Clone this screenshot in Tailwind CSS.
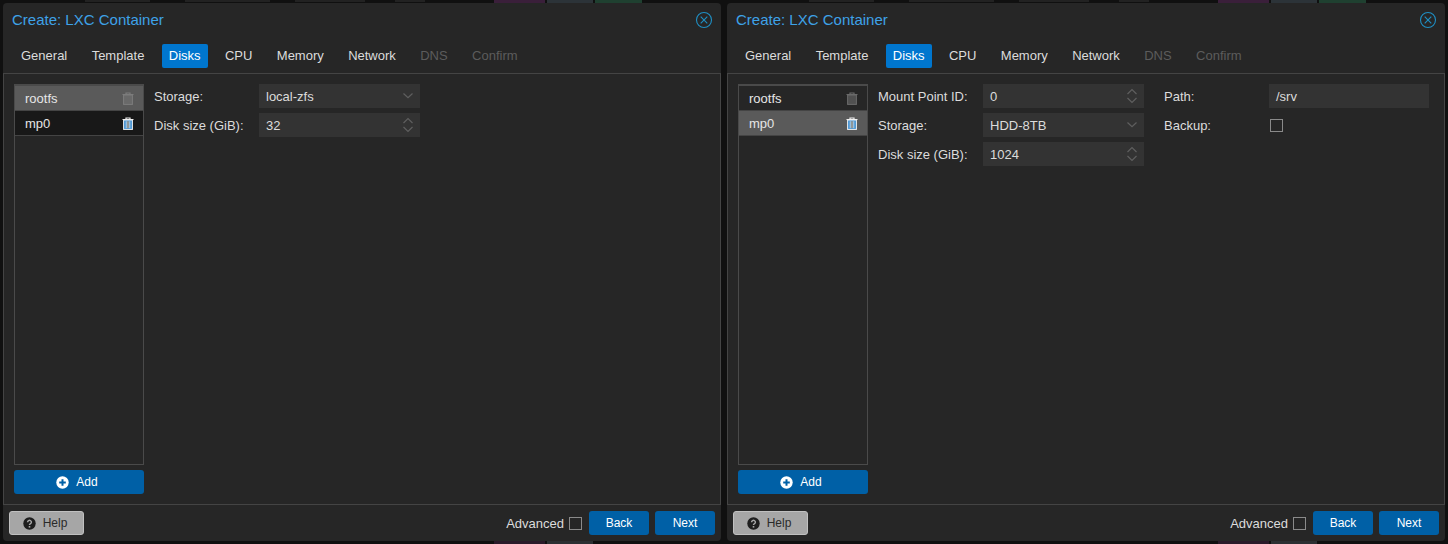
<!DOCTYPE html>
<html><head><meta charset="utf-8"><script src="https://cdn.jsdelivr.net/npm/@tailwindcss/browser@4"></script></head>
<body class="relative m-0 bg-[#101010] overflow-hidden w-[1448px] h-[544px] font-['Liberation_Sans',Arial,sans-serif]">
<!-- dimmed page behind the modal windows -->
<div class="absolute left-0 top-0 w-[1448px] h-[544px]">
  <div class="absolute left-[85px] top-0 w-[65px] h-[2px] bg-[#222]"></div>
  <div class="absolute left-[185px] top-0 w-[85px] h-[2px] bg-[#222]"></div>
  <div class="absolute left-[295px] top-0 w-[70px] h-[2px] bg-[#222]"></div>
  <div class="absolute left-[395px] top-0 w-[30px] h-[2px] bg-[#222]"></div>
  <div class="absolute left-[494px] top-0 w-[51px] h-[3px] bg-[#3a1f3a]"></div>
  <div class="absolute left-[547px] top-0 w-[46px] h-[3px] bg-[#2c3338]"></div>
  <div class="absolute left-[595px] top-0 w-[47px] h-[3px] bg-[#1f4030]"></div>
  <div class="absolute left-[809px] top-0 w-[65px] h-[2px] bg-[#222]"></div>
  <div class="absolute left-[909px] top-0 w-[85px] h-[2px] bg-[#222]"></div>
  <div class="absolute left-[1019px] top-0 w-[70px] h-[2px] bg-[#222]"></div>
  <div class="absolute left-[1119px] top-0 w-[30px] h-[2px] bg-[#222]"></div>
  <div class="absolute left-[1218px] top-0 w-[51px] h-[3px] bg-[#3a1f3a]"></div>
  <div class="absolute left-[1271px] top-0 w-[46px] h-[3px] bg-[#2c3338]"></div>
  <div class="absolute left-[1319px] top-0 w-[47px] h-[3px] bg-[#1f4030]"></div>
  <div class="absolute left-[494px] bottom-0 w-[51px] h-[3px] bg-[#2a1a2a]"></div>
  <div class="absolute left-[547px] bottom-0 w-[46px] h-[3px] bg-[#2c3033]"></div>
  <div class="absolute left-[1218px] bottom-0 w-[51px] h-[3px] bg-[#2a1a2a]"></div>
  <div class="absolute left-[1271px] bottom-0 w-[46px] h-[3px] bg-[#2c3033]"></div>
</div>
<div class="relative flex gap-[6px] pl-[3px] pt-[3px]">
<!-- LEFT -->
<section class="w-[718px] h-[538px] bg-[#262626] rounded-[4px] flex flex-col shrink-0">
  <header class="h-[35px] flex items-center justify-between pl-[9px] pr-[8px] pb-[2px]">
    <span class="text-[15px] text-[#3ea2e8] leading-[18px]">Create: LXC Container</span>
    <svg class="mt-[1px]" width="18" height="18" viewBox="0 0 18 18" fill="none" stroke="#1f8fc4" stroke-width="1.1"><circle cx="9" cy="9" r="7.5"/><path d="M5.7 5.7l6.6 6.6M12.3 5.7l-6.6 6.6"/></svg>
  </header>
  <nav class="h-[36px] flex items-center pl-[11px] text-[13px] text-[#dcdcdc] border-b border-[#444]">
    <span class="px-[7px] h-[24px] leading-[24px] mr-[10.4px]">General</span>
    <span class="px-[7px] h-[24px] leading-[24px] mr-[10.4px]">Template</span>
    <span class="px-[7px] h-[24px] leading-[24px] mr-[10.4px] bg-[#0076ce] text-white rounded-[2px]">Disks</span>
    <span class="px-[7px] h-[24px] leading-[24px] mr-[10.4px]">CPU</span>
    <span class="px-[7px] h-[24px] leading-[24px] mr-[10.4px]">Memory</span>
    <span class="px-[7px] h-[24px] leading-[24px] mr-[10.4px]">Network</span>
    <span class="px-[7px] h-[24px] leading-[24px] mr-[10.4px] text-[#5c5c5c]">DNS</span>
    <span class="px-[7px] h-[24px] leading-[24px] text-[#5c5c5c]">Confirm</span>
  </nav>
  <main class="flex-1 border-x border-[#444] flex pl-[10px] pt-[10px] pb-[10px] min-h-0">
    <div class="w-[130px] flex flex-col">
      <div class="h-[381px] border border-t-2 border-[#4a4a4a] text-[13px] text-[#e6e6e6]">
        <div class="h-[25px] bg-[#5a5a5a] flex items-center justify-between pl-[10px] pr-[9px] border-b border-[#444]"><span class="pt-[2px]">rootfs</span>
          <svg width="12" height="13" viewBox="0 0 12 13" fill="none"><path d="M.5 2.5h11M4 2.3V1h4v1.3" stroke="#7d7d7d" stroke-width="1.2"/><rect x="1.6" y="3" width="8.8" height="9.4" fill="#696969" stroke="#7d7d7d"/></svg></div>
        <div class="h-[25px] bg-[#181818] flex items-center justify-between pl-[10px] pr-[9px] border-b border-[#444]"><span class="pt-[2px]">mp0</span>
          <svg width="12" height="13" viewBox="0 0 12 13" fill="none"><path d="M.5 2.5h11M4 2.3V1h4v1.3" stroke="#f0f0f0" stroke-width="1.2"/><rect x="1.6" y="3" width="8.8" height="9.4" fill="#3f8fd2" stroke="#f0f0f0"/><path d="M4.2 4.2v7M7.8 4.2v7" stroke="#dde6ee" stroke-width=".8"/><path d="M6 4.2v7" stroke="#e2a060" stroke-width="1"/></svg></div>
      </div>
      <button class="mt-[5px] h-[24px] w-[130px] bg-[#0060a6] rounded-[3px] text-white text-[12px] flex items-center justify-center gap-[7px] pr-[4px]">
        <svg width="13" height="13" viewBox="0 0 13 13"><circle cx="6.5" cy="6.5" r="6.2" fill="#fff"/><path d="M6.5 3.2v6.6M3.2 6.5h6.6" stroke="#0060a6" stroke-width="2"/></svg>Add</button>
    </div>
    <div class="ml-[10px] text-[13px] text-[#dcdcdc] flex flex-col gap-[5px]">
      <div class="flex items-center h-[24px]"><label class="w-[105px] pt-[2px]">Storage:</label>
        <div class="w-[161px] h-[24px] bg-[#333] flex items-center justify-between pl-[7px] pr-[6px]"><span class="pt-[2px]">local-zfs</span><svg width="12" height="8" viewBox="0 0 12 8" fill="none" stroke="#5f5f5f" stroke-width="1.2"><path d="M1.5 1.5L6 5.7l4.5-4.2"/></svg></div></div>
      <div class="flex items-center h-[24px]"><label class="w-[105px] pt-[2px]">Disk size (GiB):</label>
        <div class="w-[161px] h-[24px] bg-[#333] flex items-center justify-between pl-[7px] pr-[6px]"><span class="pt-[2px]">32</span><svg width="12" height="16" viewBox="0 0 12 16" fill="none" stroke="#5f5f5f" stroke-width="1.2"><path d="M1.5 6L6 1.6 10.5 6M1.5 10L6 14.4 10.5 10"/></svg></div></div>
    </div>
  </main>
  <footer class="h-[37px] border-t border-[#444] flex items-center justify-between pl-[6px] pr-[6px]">
    <button class="w-[75px] h-[24px] bg-[#a6a6a6] border border-[#c0c0c0] rounded-[3px] text-[#2a2a2a] text-[12px] flex items-center justify-center gap-[7px] pr-[3px]">
      <svg width="13" height="13" viewBox="0 0 13 13"><circle cx="6.5" cy="6.5" r="6.2" fill="#1e1e1e"/><path d="M4.6 5.2a1.9 1.8 0 1 1 2.9 1.5c-.7.4-1 .7-1 1.4" fill="none" stroke="#a6a6a6" stroke-width="1.5"/><rect x="5.7" y="9" width="1.6" height="1.6" fill="#a6a6a6"/></svg>Help</button>
    <div class="flex items-center">
      <span class="text-[13px] text-[#dcdcdc] mr-[5px] pt-[2px]">Advanced</span>
      <span class="w-[13px] h-[13px] border border-[#8a8a8a] mr-[7px]"></span>
      <button class="w-[60px] h-[24px] bg-[#0060a6] rounded-[3px] text-white text-[12px]">Back</button>
      <button class="w-[60px] h-[24px] ml-[6px] bg-[#0060a6] rounded-[3px] text-white text-[12px]">Next</button>
    </div>
  </footer>
</section>
<!-- RIGHT -->
<section class="w-[718px] h-[538px] bg-[#262626] rounded-[4px] flex flex-col shrink-0">
  <header class="h-[35px] flex items-center justify-between pl-[9px] pr-[8px] pb-[2px]">
    <span class="text-[15px] text-[#3ea2e8] leading-[18px]">Create: LXC Container</span>
    <svg class="mt-[1px]" width="18" height="18" viewBox="0 0 18 18" fill="none" stroke="#1f8fc4" stroke-width="1.1"><circle cx="9" cy="9" r="7.5"/><path d="M5.7 5.7l6.6 6.6M12.3 5.7l-6.6 6.6"/></svg>
  </header>
  <nav class="h-[36px] flex items-center pl-[11px] text-[13px] text-[#dcdcdc] border-b border-[#444]">
    <span class="px-[7px] h-[24px] leading-[24px] mr-[10.4px]">General</span>
    <span class="px-[7px] h-[24px] leading-[24px] mr-[10.4px]">Template</span>
    <span class="px-[7px] h-[24px] leading-[24px] mr-[10.4px] bg-[#0076ce] text-white rounded-[2px]">Disks</span>
    <span class="px-[7px] h-[24px] leading-[24px] mr-[10.4px]">CPU</span>
    <span class="px-[7px] h-[24px] leading-[24px] mr-[10.4px]">Memory</span>
    <span class="px-[7px] h-[24px] leading-[24px] mr-[10.4px]">Network</span>
    <span class="px-[7px] h-[24px] leading-[24px] mr-[10.4px] text-[#5c5c5c]">DNS</span>
    <span class="px-[7px] h-[24px] leading-[24px] text-[#5c5c5c]">Confirm</span>
  </nav>
  <main class="flex-1 border-x border-[#444] flex pl-[10px] pt-[10px] pb-[10px] min-h-0">
    <div class="w-[130px] flex flex-col">
      <div class="h-[381px] border border-t-2 border-[#4a4a4a] text-[13px] text-[#e6e6e6]">
        <div class="h-[25px] bg-[#262626] flex items-center justify-between pl-[10px] pr-[9px] border-b border-[#444]"><span class="pt-[2px]">rootfs</span>
          <svg width="12" height="13" viewBox="0 0 12 13" fill="none"><path d="M.5 2.5h11M4 2.3V1h4v1.3" stroke="#6a6a6a" stroke-width="1.2"/><rect x="1.6" y="3" width="8.8" height="9.4" fill="#505050" stroke="#6a6a6a"/></svg></div>
        <div class="h-[25px] bg-[#5a5a5a] flex items-center justify-between pl-[10px] pr-[9px] border-b border-[#444]"><span class="pt-[2px]">mp0</span>
          <svg width="12" height="13" viewBox="0 0 12 13" fill="none"><path d="M.5 2.5h11M4 2.3V1h4v1.3" stroke="#f0f0f0" stroke-width="1.2"/><rect x="1.6" y="3" width="8.8" height="9.4" fill="#3f8fd2" stroke="#f0f0f0"/><path d="M4.2 4.2v7M7.8 4.2v7" stroke="#dde6ee" stroke-width=".8"/><path d="M6 4.2v7" stroke="#e2a060" stroke-width="1"/></svg></div>
      </div>
      <button class="mt-[5px] h-[24px] w-[130px] bg-[#0060a6] rounded-[3px] text-white text-[12px] flex items-center justify-center gap-[7px] pr-[4px]">
        <svg width="13" height="13" viewBox="0 0 13 13"><circle cx="6.5" cy="6.5" r="6.2" fill="#fff"/><path d="M6.5 3.2v6.6M3.2 6.5h6.6" stroke="#0060a6" stroke-width="2"/></svg>Add</button>
    </div>
    <div class="ml-[10px] text-[13px] text-[#dcdcdc] flex flex-col gap-[5px]">
      <div class="flex items-center h-[24px]"><label class="w-[105px] pt-[2px]">Mount Point ID:</label>
        <div class="w-[161px] h-[24px] bg-[#333] flex items-center justify-between pl-[7px] pr-[6px]"><span class="pt-[2px]">0</span><svg width="12" height="16" viewBox="0 0 12 16" fill="none" stroke="#5f5f5f" stroke-width="1.2"><path d="M1.5 6L6 1.6 10.5 6M1.5 10L6 14.4 10.5 10"/></svg></div>
        <label class="ml-[20px] w-[105px] pt-[2px]">Path:</label>
        <div class="w-[160px] h-[24px] bg-[#333] flex items-center pl-[7px]"><span class="pt-[2px]">/srv</span></div></div>
      <div class="flex items-center h-[24px]"><label class="w-[105px] pt-[2px]">Storage:</label>
        <div class="w-[161px] h-[24px] bg-[#333] flex items-center justify-between pl-[7px] pr-[6px]"><span class="pt-[2px]">HDD-8TB</span><svg width="12" height="8" viewBox="0 0 12 8" fill="none" stroke="#5f5f5f" stroke-width="1.2"><path d="M1.5 1.5L6 5.7l4.5-4.2"/></svg></div>
        <label class="ml-[20px] w-[106px] pt-[2px]">Backup:</label>
        <span class="w-[13px] h-[13px] border border-[#8a8a8a]"></span></div>
      <div class="flex items-center h-[24px]"><label class="w-[105px] pt-[2px]">Disk size (GiB):</label>
        <div class="w-[161px] h-[24px] bg-[#333] flex items-center justify-between pl-[7px] pr-[6px]"><span class="pt-[2px]">1024</span><svg width="12" height="16" viewBox="0 0 12 16" fill="none" stroke="#5f5f5f" stroke-width="1.2"><path d="M1.5 6L6 1.6 10.5 6M1.5 10L6 14.4 10.5 10"/></svg></div></div>
    </div>
  </main>
  <footer class="h-[37px] border-t border-[#444] flex items-center justify-between pl-[6px] pr-[6px]">
    <button class="w-[75px] h-[24px] bg-[#a6a6a6] border border-[#c0c0c0] rounded-[3px] text-[#2a2a2a] text-[12px] flex items-center justify-center gap-[7px] pr-[3px]">
      <svg width="13" height="13" viewBox="0 0 13 13"><circle cx="6.5" cy="6.5" r="6.2" fill="#1e1e1e"/><path d="M4.6 5.2a1.9 1.8 0 1 1 2.9 1.5c-.7.4-1 .7-1 1.4" fill="none" stroke="#a6a6a6" stroke-width="1.5"/><rect x="5.7" y="9" width="1.6" height="1.6" fill="#a6a6a6"/></svg>Help</button>
    <div class="flex items-center">
      <span class="text-[13px] text-[#dcdcdc] mr-[5px] pt-[2px]">Advanced</span>
      <span class="w-[13px] h-[13px] border border-[#8a8a8a] mr-[7px]"></span>
      <button class="w-[60px] h-[24px] bg-[#0060a6] rounded-[3px] text-white text-[12px]">Back</button>
      <button class="w-[60px] h-[24px] ml-[6px] bg-[#0060a6] rounded-[3px] text-white text-[12px]">Next</button>
    </div>
  </footer>
</section>
</div>
</body></html>
